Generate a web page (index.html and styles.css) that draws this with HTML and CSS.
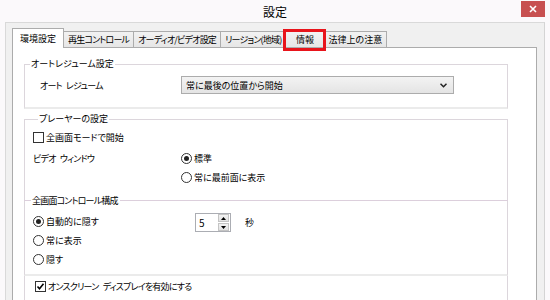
FILE: index.html
```html
<!DOCTYPE html>
<html lang="ja">
<head>
    <meta charset="UTF-8">
    <meta name="viewport" content="width=device-width, initial-scale=1.0">
    <title>設定</title>
    <link rel="stylesheet" href="styles.css">
</head>
<body>
    <div class="titlebar">
        <span></span>
        <div class="title">設定</div>
        <div class="close">
            <svg width="8" height="8" viewBox="0 0 8 8"><path d="M1 1L7 7M7 1L1 7" stroke="#fff" stroke-width="1.6"/></svg>
        </div>
    </div>

    <div class="client">
        <div class="tabs">
            <div class="tab active">環境設定</div>
            <div class="tab narrow">再生コントロール</div>
            <div class="tab narrow">オーディオ/ビデオ設定</div>
            <div class="tab narrow">リージョン(地域)</div>
            <div class="tab marked">情報</div>
            <div class="tab">法律上の注意</div>
        </div>

        <div class="panel">
            <fieldset class="group">
                <legend>オートレジューム設定</legend>
                <div class="resume-row">
                    <span class="resume-label narrow">オート レジューム</span>
                    <div class="select">
                        <span>常に最後の位置から開始</span>
                        <svg width="7" height="5" viewBox="0 0 7 5"><path d="M0.5 0.8L3.5 3.8L6.5 0.8" stroke="#222" stroke-width="1.5" fill="none"/></svg>
                    </div>
                </div>
            </fieldset>

            <fieldset class="group player">
                <legend>プレーヤーの設定</legend>
                <label class="opt"><span class="box"></span>全画面モードで開始</label>

                <div class="video-row">
                    <span class="video-label narrow">ビデオ ウィンドウ</span>
                    <div class="choices">
                        <label class="opt"><span class="radio on"></span>標準</label>
                        <label class="opt"><span class="radio"></span>常に最前面に表示</label>
                    </div>
                </div>

                <div class="subhead"><span class="narrow">全画面コントロール構成</span></div>

                <div class="hide-row">
                    <div class="hide-choices">
                        <label class="opt"><span class="radio on"></span>自動的に隠す</label>
                        <label class="opt"><span class="radio"></span>常に表示</label>
                        <label class="opt"><span class="radio"></span>隠す</label>
                    </div>
                    <div class="spinner">
                        <span class="spin-value">5</span>
                        <div class="spin-buttons">
                            <span class="spin-btn"><svg width="5" height="3" viewBox="0 0 5 3"><path d="M0 3L2.5 0L5 3Z" fill="#000"/></svg></span>
                            <span class="spin-btn"><svg width="5" height="3" viewBox="0 0 5 3"><path d="M0 0L2.5 3L5 0Z" fill="#000"/></svg></span>
                        </div>
                    </div>
                    <span class="unit">秒</span>
                </div>
            </fieldset>

            <div class="group-plain">
                <label class="opt"><span class="box"><svg width="9" height="9" viewBox="0 0 9 9"><path d="M1.5 4.5L3.5 6.8L7.5 1.8" stroke="#000" stroke-width="1.6" fill="none"/></svg></span><span class="narrow">オンスクリーン ディスプレイを有効にする</span></label>
            </div>
        </div>
    </div>
</body>
</html>
```

FILE: styles.css
```css
body {
    margin: 0;
    width: 550px;
    height: 300px;
    overflow: hidden;
    background: #fbf9fb;
    font-family: "Noto Sans CJK JP", sans-serif;
    font-size: 9px;
    font-feature-settings: "palt";
    color: #000;
}

/* katakana-heavy labels run tighter, like Meiryo UI */
.narrow {
    letter-spacing: -0.8px;
    word-spacing: 3px;
}

/* window title */
.titlebar {
    height: 22px;
    display: grid;
    grid-template-columns: 1fr auto 1fr;
    align-items: start;
}
.title {
    font-size: 12px;
    line-height: 24px;
}
.close {
    justify-self: end;
    width: 24px;
    height: 16px;
    margin: 1px 5px 0 0;
    background: #c75050;
    display: flex;
    align-items: center;
    justify-content: center;
}

.client {
    height: 278px;
    margin: 0 5px;
    padding: 6px 7px 0 6px;
    background: #f0f0f0;
    border-top: 1px solid #d9d9d9;
    border-left: 1px solid #d9d9d9;
    border-right: 1px solid #d4d4d4;
}

/* tabs */
.tabs {
    display: flex;
    align-items: flex-end;
    height: 18px;
    position: relative;
    z-index: 1;
}
.tab {
    height: 15px;
    min-width: 29px;
    line-height: 15px;
    padding: 0 4px;
    margin-left: -1px;
    border: 1px solid #acacac;
    border-bottom: none;
    background: linear-gradient(#f2f2f2, #e6e6e6);
    text-align: center;
    white-space: nowrap;
}
.tab.active {
    height: 19px;
    line-height: 19px;
    margin: 0 0 -1px 0;
    padding: 0 7px;
    background: #fff;
}
.tab.marked {
    position: relative;
}
.tab.marked::after {
    content: "";
    position: absolute;
    left: -3px;
    right: -3px;
    top: -3px;
    bottom: -4px;
    border: 3px solid #e8141b;
}

.panel {
    height: 260px;
    background: #fff;
    border: 1px solid #acacac;
}

/* group boxes */
.group {
    margin: 10px 28px 0 11px;
    padding: 0;
    border: 1px solid #dcd6dc;
    border-bottom: 2px solid #ebebeb;
    min-width: 0;
}
.group legend {
    margin-left: 5px;
    padding: 0 1px;
    line-height: 12px;
}
.group.player {
    margin-top: 4px;
    padding: 0 0 5px 8px;
}
.group-plain {
    margin: 0 28px 0 11px;
    padding: 1px 0 0 10px;
    border-left: 1px solid #dcd6dc;
    border-right: 1px solid #dcd6dc;
    height: 30px;
}

.resume-row {
    display: flex;
    align-items: center;
    padding: 6px 0 13px 15px;
}
.resume-label {
    width: 141px;
}
.select {
    width: 273px;
    height: 18px;
    box-sizing: border-box;
    display: flex;
    align-items: center;
    justify-content: space-between;
    padding: 0 6px 0 4px;
    background: linear-gradient(#f3f3f3, #e4e4e4);
    border: 1px solid #acacac;
}

/* options */
.opt {
    display: flex;
    align-items: center;
    height: 19px;
    gap: 2px;
}
.group.player > .opt {
    margin-top: 3px;
}
.box {
    width: 11px;
    height: 11px;
    box-sizing: border-box;
    border: 1px solid #333;
    background: #fff;
    display: flex;
    align-items: center;
    justify-content: center;
}
.radio {
    width: 11px;
    height: 11px;
    box-sizing: border-box;
    border: 1px solid #333;
    border-radius: 50%;
    background: #fff;
    display: flex;
    align-items: center;
    justify-content: center;
}
.radio.on::after {
    content: "";
    width: 5px;
    height: 5px;
    border-radius: 50%;
    background: #222;
}

.video-row {
    display: flex;
    align-items: flex-start;
    margin-top: 2px;
}
.video-label {
    width: 147px;
    line-height: 19px;
}
.choices .opt {
    padding-left: 1px;
}

.subhead {
    display: flex;
    align-items: center;
    height: 19px;
    margin: 4px -1px 0 -9px;
}
.subhead::before,
.subhead::after {
    content: "";
    height: 1px;
    background: #dccfdc;
}
.subhead::before {
    width: 7px;
    margin-right: 1px;
}
.subhead::after {
    flex: 1;
    margin-left: 2px;
}

.hide-row {
    display: flex;
    align-items: flex-start;
    margin-top: 2px;
}
.hide-choices {
    width: 162px;
}
.spinner {
    display: flex;
    margin-top: 1px;
    height: 19px;
    border: 1px solid #abadb3;
    box-sizing: border-box;
    background: #fff;
}
.spin-value {
    width: 21px;
    padding-left: 3px;
    line-height: 17px;
    font-size: 10px;
    box-sizing: border-box;
}
.spin-buttons {
    display: flex;
    flex-direction: column;
    gap: 1px;
    padding: 0 1px;
}
.spin-btn {
    width: 11px;
    height: 8px;
    box-sizing: border-box;
    background: linear-gradient(#f2f2f2, #e2e2e2);
    border: 1px solid #c4c4c4;
    display: flex;
    align-items: center;
    justify-content: center;
}
.unit {
    margin-left: 14px;
    line-height: 21px;
}
```
